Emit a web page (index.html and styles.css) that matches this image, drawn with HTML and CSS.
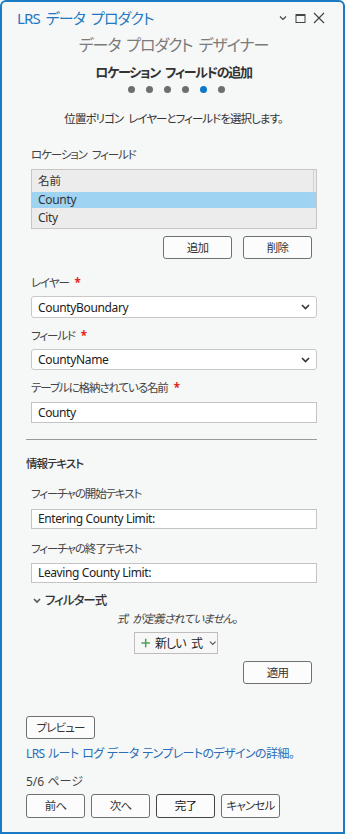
FILE: index.html
```html
<!DOCTYPE html>
<html lang="ja">
<head>
<meta charset="utf-8">
<link rel="stylesheet" href="styles.css">
</head>
<body>
<div class="window">
  <div class="titlebar">
    <div class="apptitle">LRS データ プロダクト</div>
    <div class="winbtns">
      <svg width="10" height="8" viewBox="0 0 10 8"><path d="M2 2.5 L5 5.5 L8 2.5" fill="none" stroke="#444" stroke-width="1.2"/></svg>
      <svg width="11" height="11" viewBox="0 0 11 11"><rect x="1" y="1.5" width="9" height="8" fill="none" stroke="#444" stroke-width="1"/><rect x="1" y="1" width="9" height="2" fill="#444"/></svg>
      <svg width="12" height="12" viewBox="0 0 12 12"><path d="M1 1 L11 11 M11 1 L1 11" stroke="#444" stroke-width="1.2"/></svg>
    </div>
  </div>

  <div class="header">
    <div class="subtitle">データ プロダクト デザイナー</div>
    <div class="step">ロケーション フィールドの追加</div>
    <div class="dots">
      <span class="dot"></span><span class="dot"></span><span class="dot"></span><span class="dot"></span><span class="dot active"></span><span class="dot"></span>
    </div>
    <div class="desc">位置ポリゴン レイヤーとフィールドを選択します。</div>
  </div>

  <div class="content">
    <div class="inner">
      <div class="label lbl-first">ロケーション フィールド</div>
      <div class="table">
        <div class="thead"><div class="th">名前</div><div class="thpad"></div></div>
        <div class="row selected">County</div>
        <div class="row last">City</div>
      </div>
      <div class="btnrow">
        <button class="btn w69">追加</button>
        <button class="btn w69">削除</button>
      </div>

      <div class="label lbl-layer">レイヤー <span class="req">*</span></div>
      <div class="select s1"><span class="val">CountyBoundary</span>
        <svg width="9" height="6" viewBox="0 0 9 6"><path d="M1 1 L4.5 4.5 L8 1" fill="none" stroke="#333" stroke-width="1.6"/></svg>
      </div>
      <div class="label lbl-next">フィールド <span class="req">*</span></div>
      <div class="select s2"><span class="val">CountyName</span>
        <svg width="9" height="6" viewBox="0 0 9 6"><path d="M1 1 L4.5 4.5 L8 1" fill="none" stroke="#333" stroke-width="1.6"/></svg>
      </div>
      <div class="label lbl-next">テーブルに格納されている名前 <span class="req">*</span></div>
      <div class="input i1">County</div>
    </div>

    <div class="sep"></div>

    <div class="section">情報テキスト</div>
    <div class="inner">
      <div class="label lbl-start">フィーチャの開始テキスト</div>
      <div class="input i2">Entering County Limit:</div>
      <div class="label lbl-end">フィーチャの終了テキスト</div>
      <div class="input i3">Leaving County Limit:</div>

      <div class="filter">
        <svg width="8" height="6" viewBox="0 0 8 6"><path d="M1 1 L4 4 L7 1" fill="none" stroke="#555" stroke-width="1.6"/></svg>
        <span>フィルター式</span>
      </div>
      <div class="noexpr">式 が定義されていません。</div>
      <div class="newrow">
        <div class="newbtn">
          <svg width="10" height="10" viewBox="0 0 10 10"><path d="M5 0.5 V9.5 M0.5 5 H9.5" stroke="#4aa05a" stroke-width="1.6"/></svg>
          <span class="newtxt">新しい 式</span>
          <svg class="nchev" width="8" height="6" viewBox="0 0 8 6"><path d="M1 1.5 L4 4.5 L7 1.5" fill="none" stroke="#555" stroke-width="1.2"/></svg>
        </div>
      </div>
      <div class="btnrow apply">
        <button class="btn w69">適用</button>
      </div>
    </div>

    <button class="btn preview">プレビュー</button>
    <div class="link">LRS ルート ログ データ テンプレートのデザインの詳細。</div>
    <div class="page">5/6 ページ</div>
    <div class="navrow">
      <button class="btn nav">前へ</button>
      <button class="btn nav">次へ</button>
      <button class="btn nav primary">完了</button>
      <button class="btn nav">キャンセル</button>
    </div>
  </div>
</div>
</body>
</html>
```

FILE: styles.css
```css
* { box-sizing: border-box; }
html, body { margin: 0; padding: 0; background: #ffffff; }
body {
  width: 346px;
  height: 834px;
  font-family: "Noto Sans", "Noto Sans CJK JP", sans-serif;
  font-feature-settings: "palt";
  font-size: 12px;
  color: #333;
}
.window {
  width: 345px;
  height: 834px;
  border: 2px solid #1b7cc3;
  border-radius: 6px 6px 0 0;
  background: #f6f7f7;
  overflow: hidden;
}
.titlebar {
  height: 32px;
  display: flex;
  align-items: center;
  justify-content: space-between;
  padding: 0 18px 0 15px;
}
.apptitle {
  font-size: 15px;
  letter-spacing: -0.9px;
  word-spacing: 3px;
  color: #1f78c1;
  line-height: 20px;
}
.winbtns {
  display: flex;
  align-items: center;
  gap: 7px;
}
.header { text-align: center; padding-left: 2px; }
.subtitle {
  font-size: 16px;
  letter-spacing: -1.1px;
  word-spacing: 3px;
  line-height: 20px;
  color: #7b7b7b;
  margin-top: 1px;
}
.step {
  font-size: 13px;
  letter-spacing: -1.3px;
  word-spacing: 3px;
  font-weight: bold;
  line-height: 18px;
  margin-top: 8px;
  color: #333;
}
.dots {
  display: flex;
  justify-content: center;
  gap: 11px;
  margin-top: 5px;
  padding-left: 5px;
}
.dot {
  width: 7px;
  height: 7px;
  border-radius: 50%;
  background: #6e6e6e;
}
.dot.active { background: #0b78c8; }
.desc {
  font-size: 11.5px;
  letter-spacing: -0.95px;
  word-spacing: 3px;
  line-height: 16px;
  margin-top: 18px;
  color: #333;
}
.content {
  padding: 0 26px 0 24px;
}
.inner { padding-left: 5px; }
.label {
  font-size: 11.5px;
  letter-spacing: -1.1px;
  word-spacing: 3px;
  line-height: 16px;
  color: #444;
}
.lbl-first { margin-top: 20px; }
.req { color: #e5231b; font-weight: bold; margin-left: 1px; }
.table {
  margin-top: 6px;
  border: 1px solid #c6c6c6;
  background: #ececec;
  height: 60px;
}
.thead {
  display: flex;
  height: 22px;
}
.th {
  flex: 1;
  padding-left: 6px;
  line-height: 22px;
  font-size: 11.5px;
  border-right: 1px solid #d0d0d0;
  color: #333;
}
.thpad { width: 2px; }
.row {
  padding-left: 6px;
  color: #333;
  letter-spacing: -0.3px;
}
.row.selected {
  background: #9fd3f2;
  height: 16px;
  line-height: 16px;
}
.row.last {
  height: 20px;
  line-height: 20px;
}
.btnrow {
  display: flex;
  justify-content: flex-end;
  gap: 11px;
  margin-top: 7px;
  padding-right: 5px;
}
.btn {
  font-family: inherit;
  font-feature-settings: "palt";
  font-size: 11.5px;
  letter-spacing: -0.8px;
  color: #333;
  background: #fcfcfc;
  border: 1px solid #707070;
  border-radius: 3px;
  height: 23px;
  padding: 0;
  line-height: 20px;
}
.w69 { width: 69px; }
.lbl-layer { margin-top: 16px; }
.lbl-next { margin-top: 10px; }
.select {
  margin-top: 5px;
  height: 22px;
  background: #fff;
  border: 1px solid #c8c8c8;
  border-radius: 3px;
  display: flex;
  align-items: center;
  justify-content: space-between;
  padding: 0 6px 0 6px;
  color: #222;
}
.val { letter-spacing: -0.35px; }
.s2 { height: 21px; }
.input {
  margin-top: 6px;
  height: 21px;
  background: #fff;
  border: 1px solid #c4c4c4;
  padding-left: 6px;
  line-height: 19px;
  letter-spacing: -0.4px;
  color: #222;
}
.sep {
  margin-top: 16px;
  height: 1px;
  background: #9a9a9a;
}
.section {
  margin-top: 16px;
  line-height: 16px;
  font-size: 11.5px;
  letter-spacing: -1px;
  font-weight: 500;
  color: #333;
}
.lbl-start { margin-top: 14px; }
.i2 { margin-top: 7px; height: 20px; line-height: 18px; }
.lbl-end { margin-top: 12px; }
.i3 { margin-top: 6px; height: 20px; line-height: 18px; }
.filter {
  margin-top: 10px;
  line-height: 16px;
  display: flex;
  align-items: center;
  gap: 4px;
  font-size: 12.5px;
  letter-spacing: -1px;
  font-weight: 500;
  color: #333;
  padding-left: 2px;
}
.noexpr {
  margin-top: 2px;
  line-height: 16px;
  font-size: 11.5px;
  letter-spacing: -0.9px;
  word-spacing: 3px;
  text-align: center;
  font-style: italic;
  color: #444;
  padding-left: 6px;
}
.newrow {
  display: flex;
  justify-content: center;
  margin-top: 5px;
  padding-left: 3px;
}
.newbtn {
  width: 84px;
  height: 22px;
  border: 1px solid #bdbdbd;
  background: #f7f7f7;
  display: flex;
  align-items: center;
  padding-left: 6px;
  gap: 5px;
  color: #222;
  white-space: nowrap;
}
.newtxt { font-size: 12px; letter-spacing: -0.9px; word-spacing: 3px; }
.nchev { margin-left: 2px; }
.apply { margin-top: 7px; }
.preview {
  display: block;
  width: 69px;
  margin-top: 32px;
}
.link {
  margin-top: 7px;
  line-height: 16px;
  letter-spacing: -0.6px;
  word-spacing: 1px;
  color: #2a6db8;
}
.page {
  margin-top: 12px;
  line-height: 16px;
  color: #444;
}
.navrow {
  display: flex;
  gap: 6px;
  margin-top: 4px;
}
.nav { width: 59px; height: 24px; }
.nav.primary { border-color: #444; color: #111; }
```
